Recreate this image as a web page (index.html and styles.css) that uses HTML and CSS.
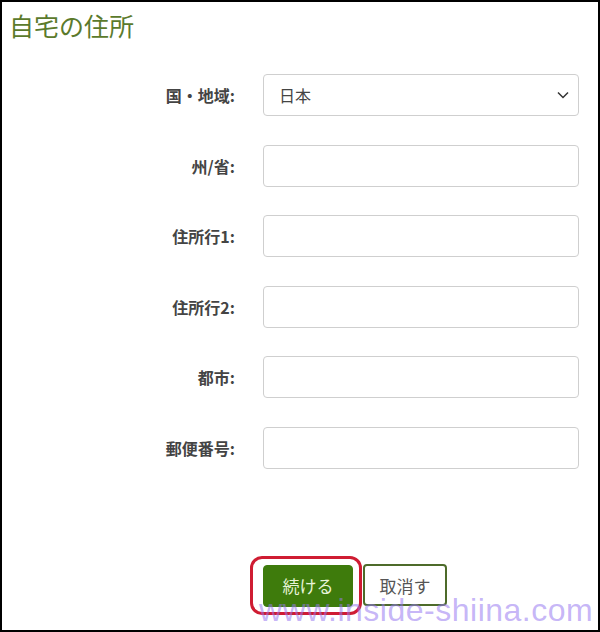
FILE: index.html
```html
<!DOCTYPE html>
<html>
<head>
  <meta charset="utf-8">
  <link rel="stylesheet" href="styles.css">
</head>
<body>
  <div class="frame">
    <div class="title">自宅の住所</div>

    <div class="form">
      <div class="row">
        <label class="label">国・地域:</label>
        <div class="select">
          <span>日本</span>
          <svg class="chevron" width="12" height="8" viewBox="0 0 12 8"><path d="M1 1.5 L6 6.5 L11 1.5" fill="none" stroke="#333" stroke-width="1.5"/></svg>
        </div>
      </div>
      <div class="row">
        <label class="label">州/省:</label>
        <div class="input"></div>
      </div>
      <div class="row">
        <label class="label">住所行1:</label>
        <div class="input"></div>
      </div>
      <div class="row">
        <label class="label">住所行2:</label>
        <div class="input"></div>
      </div>
      <div class="row">
        <label class="label">都市:</label>
        <div class="input"></div>
      </div>
      <div class="row">
        <label class="label">郵便番号:</label>
        <div class="input"></div>
      </div>
    </div>

    <div class="actions">
      <div class="highlight">
        <button class="btn btn-primary">続ける</button>
      </div>
      <button class="btn btn-outline">取消す</button>
    </div>

    <div class="watermark">www.inside-shiina.com</div>
  </div>
</body>
</html>
```

FILE: styles.css
```css
:root {
  --green: #3e7b0c;
  --title-green: #5b7a2c;
  --label: #444;
  --border: #cfcfcf;
  --font-sans: "Noto Sans CJK JP", "Noto Sans", "Liberation Sans", sans-serif;
}

body {
  margin: 0;
  font-family: var(--font-sans);
  background: #fff;
}

.frame {
  position: relative;
  box-sizing: border-box;
  width: 600px;
  height: 632px;
  border: 2px solid #000;
  overflow: hidden;
}

.title {
  padding: 6px 0 0 7px;
  font-size: 25px;
  line-height: 34px;
  color: var(--title-green);
}

.form {
  display: flex;
  flex-direction: column;
  gap: 28.6px;
  margin-top: 32px;
}

.row {
  display: grid;
  grid-template-columns: 233px 316px;
  column-gap: 28px;
  align-items: center;
}

.label {
  text-align: right;
  font-size: 16px;
  font-weight: 700;
  color: var(--label);
}

.input,
.select {
  box-sizing: border-box;
  height: 42px;
  border: 1px solid var(--border);
  border-radius: 4px;
  background: #fff;
}

.select {
  display: flex;
  align-items: center;
  justify-content: space-between;
  padding: 0 9px 0 15px;
  font-size: 16px;
  color: #444;
}

.actions {
  display: flex;
  align-items: center;
  gap: 1px;
  margin: 87px 0 0 258px;
}

.highlight {
  padding: 6px 6px 5px 10px;
  border: 3px solid #cf1c32;
  border-radius: 12px;
  margin-left: -10px;
}

.btn {
  box-sizing: border-box;
  height: 42px;
  border-radius: 4px;
  font-family: var(--font-sans);
  font-size: 17px;
  cursor: pointer;
}

.btn-primary {
  width: 90px;
  display: block;
  border: 1px solid var(--green);
  background: var(--green);
  color: #e8f4d8;
}

.btn-outline {
  width: 84px;
  border: 2px solid #4d6b2a;
  background: #fff;
  color: #555;
}

.watermark {
  position: absolute;
  left: 257px;
  top: 590px;
  font-family: "Liberation Sans", sans-serif;
  font-size: 32px;
  letter-spacing: 0.5px;
  white-space: nowrap;
  color: rgba(150, 120, 240, 0.55);
  pointer-events: none;
}
```
